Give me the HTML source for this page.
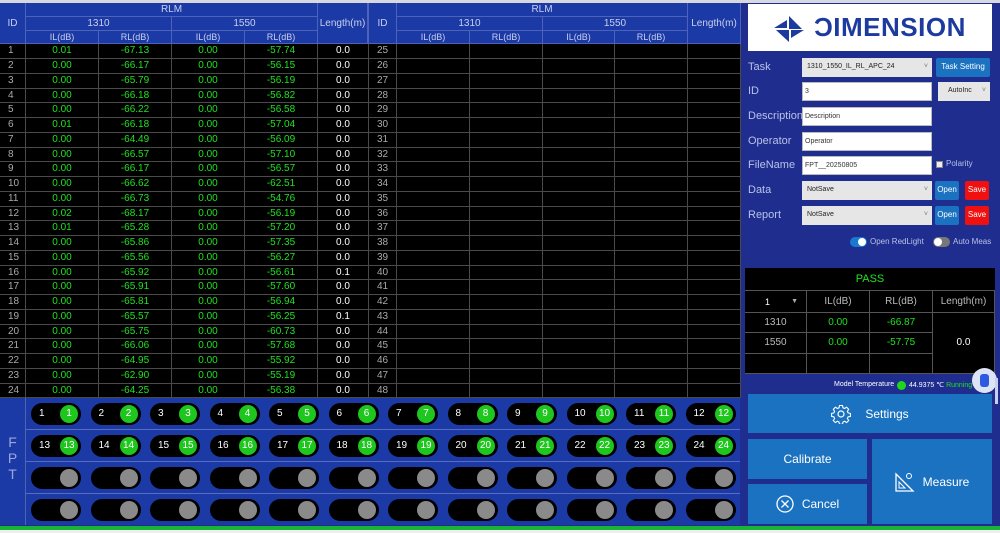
<!DOCTYPE html>
<html><head><meta charset="utf-8"><style>
*{box-sizing:border-box;margin:0;padding:0}
body{width:1000px;height:533px;background:#1e2d8e;font-family:"Liberation Sans",sans-serif;position:relative;overflow:hidden}
.topline{position:absolute;left:0;top:0;width:1000px;height:3px;background:#d8d8e0}
.grid{position:absolute;left:0;top:3px;width:740px;display:grid;grid-template-columns:26px 73px 73px 73px 73px 51px 28px 73px 73px 72px 73px 53px}
.h{background:#1c3aa6;color:#c8d0ee;font-size:10px;display:flex;align-items:center;justify-content:center;border-right:1px solid #4e63b8;border-bottom:1px solid #4e63b8}
.h.s{font-size:9px}
.rows{position:absolute;left:0;top:44px;width:740px}
.r{display:grid;grid-template-columns:26px 73px 73px 73px 73px 51px 28px 73px 73px 72px 73px 53px;height:15px}
.r:nth-child(4n){height:14px}
.r div{background:#000;border-right:1px solid #4a4a4a;border-bottom:1px solid #4a4a4a;font-size:10px;line-height:13px;text-align:center;color:#21e021;overflow:hidden}
.r div.i{color:#aaa;text-align:left;padding-left:8px}
.r div.i2{color:#aaa}
.r div.l{color:#fff}
.fpt{position:absolute;left:0;top:398px;width:740px;height:127px;background:#1c3aa6}
.fl{position:absolute;left:0;top:0;width:26px;height:127px;border-right:1px solid #4e63b8;color:#9aa6dc;font-size:14px;text-align:center;padding-top:36px;line-height:16px}
.fr{position:absolute;left:26px;width:714px;height:32px;border-bottom:1px solid #5a6cc0;display:flex;align-items:center;padding-left:5px}
.p{width:50px;height:22px;border-radius:11px;background:#000;margin-right:9.5px;position:relative;color:#fff;font-size:10px;line-height:22px;flex:none}
.p span{position:absolute;left:8px}
.p b{position:absolute;right:3px;top:2px;width:18px;height:18px;border-radius:50%;background:#1ec61e;color:#fff;font-weight:normal;font-size:10px;line-height:18px;text-align:center}
.p b.g{background:#8a8a8a}
.green{position:absolute;left:0;top:526px;width:1000px;height:4px;background:#19b436}
.white{position:absolute;left:0;top:530px;width:1000px;height:3px;background:#eee}
.lbl{position:absolute;left:748px;color:#b9c2e8;font-size:11px}
.in{position:absolute;background:#fff;border:1px solid #bbb;font-size:7px;color:#333;padding-left:2px;line-height:18px;height:19px}
.sel{position:absolute;background:#e6e6e6;font-size:7px;color:#222;padding-left:5px;line-height:18px;height:19px}
.sel:after{content:"˅";position:absolute;right:4px;top:0;color:#777;font-size:7px}
.bt{position:absolute;color:#fff;font-size:8px;text-align:center;line-height:18px;height:19px;border-radius:2px}
.rt{position:absolute;left:745px;top:268px;width:250px;height:106px;background:#000}
.rt div{position:absolute;border-right:1px solid #555;border-bottom:1px solid #555;color:#bbb;font-size:10px;text-align:center}
.big{position:absolute;background:#1a72c0;color:#fff;font-size:12px;display:flex;align-items:center;justify-content:center}
</style></head><body>
<div class="topline"></div>
<div class="grid" style="grid-template-rows:14px 14px 13px">
<div class="h" style="grid-row:1/4;grid-column:1">ID</div>
<div class="h" style="grid-row:1;grid-column:2/6">RLM</div>
<div class="h" style="grid-row:2;grid-column:2/4">1310</div>
<div class="h" style="grid-row:2;grid-column:4/6">1550</div>
<div class="h s" style="grid-row:3;grid-column:2">IL(dB)</div>
<div class="h s" style="grid-row:3;grid-column:3">RL(dB)</div>
<div class="h s" style="grid-row:3;grid-column:4">IL(dB)</div>
<div class="h s" style="grid-row:3;grid-column:5">RL(dB)</div>
<div class="h" style="grid-row:1/4;grid-column:6;border-right:2px solid #4e63b8">Length(m)</div>
<div class="h" style="grid-row:1/4;grid-column:7">ID</div>
<div class="h" style="grid-row:1;grid-column:8/12">RLM</div>
<div class="h" style="grid-row:2;grid-column:8/10">1310</div>
<div class="h" style="grid-row:2;grid-column:10/12">1550</div>
<div class="h s" style="grid-row:3;grid-column:8">IL(dB)</div>
<div class="h s" style="grid-row:3;grid-column:9">RL(dB)</div>
<div class="h s" style="grid-row:3;grid-column:10">IL(dB)</div>
<div class="h s" style="grid-row:3;grid-column:11">RL(dB)</div>
<div class="h" style="grid-row:1/4;grid-column:12">Length(m)</div>
</div>
<div class="rows">
<div class="r"><div class="i">1</div><div>0.01</div><div>-67.13</div><div>0.00</div><div>-57.74</div><div class="l">0.0</div><div class="i2">25</div><div></div><div></div><div></div><div></div><div></div></div>
<div class="r"><div class="i">2</div><div>0.00</div><div>-66.17</div><div>0.00</div><div>-56.15</div><div class="l">0.0</div><div class="i2">26</div><div></div><div></div><div></div><div></div><div></div></div>
<div class="r"><div class="i">3</div><div>0.00</div><div>-65.79</div><div>0.00</div><div>-56.19</div><div class="l">0.0</div><div class="i2">27</div><div></div><div></div><div></div><div></div><div></div></div>
<div class="r"><div class="i">4</div><div>0.00</div><div>-66.18</div><div>0.00</div><div>-56.82</div><div class="l">0.0</div><div class="i2">28</div><div></div><div></div><div></div><div></div><div></div></div>
<div class="r"><div class="i">5</div><div>0.00</div><div>-66.22</div><div>0.00</div><div>-56.58</div><div class="l">0.0</div><div class="i2">29</div><div></div><div></div><div></div><div></div><div></div></div>
<div class="r"><div class="i">6</div><div>0.01</div><div>-66.18</div><div>0.00</div><div>-57.04</div><div class="l">0.0</div><div class="i2">30</div><div></div><div></div><div></div><div></div><div></div></div>
<div class="r"><div class="i">7</div><div>0.00</div><div>-64.49</div><div>0.00</div><div>-56.09</div><div class="l">0.0</div><div class="i2">31</div><div></div><div></div><div></div><div></div><div></div></div>
<div class="r"><div class="i">8</div><div>0.00</div><div>-66.57</div><div>0.00</div><div>-57.10</div><div class="l">0.0</div><div class="i2">32</div><div></div><div></div><div></div><div></div><div></div></div>
<div class="r"><div class="i">9</div><div>0.00</div><div>-66.17</div><div>0.00</div><div>-56.57</div><div class="l">0.0</div><div class="i2">33</div><div></div><div></div><div></div><div></div><div></div></div>
<div class="r"><div class="i">10</div><div>0.00</div><div>-66.62</div><div>0.00</div><div>-62.51</div><div class="l">0.0</div><div class="i2">34</div><div></div><div></div><div></div><div></div><div></div></div>
<div class="r"><div class="i">11</div><div>0.00</div><div>-66.73</div><div>0.00</div><div>-54.76</div><div class="l">0.0</div><div class="i2">35</div><div></div><div></div><div></div><div></div><div></div></div>
<div class="r"><div class="i">12</div><div>0.02</div><div>-68.17</div><div>0.00</div><div>-56.19</div><div class="l">0.0</div><div class="i2">36</div><div></div><div></div><div></div><div></div><div></div></div>
<div class="r"><div class="i">13</div><div>0.01</div><div>-65.28</div><div>0.00</div><div>-57.20</div><div class="l">0.0</div><div class="i2">37</div><div></div><div></div><div></div><div></div><div></div></div>
<div class="r"><div class="i">14</div><div>0.00</div><div>-65.86</div><div>0.00</div><div>-57.35</div><div class="l">0.0</div><div class="i2">38</div><div></div><div></div><div></div><div></div><div></div></div>
<div class="r"><div class="i">15</div><div>0.00</div><div>-65.56</div><div>0.00</div><div>-56.27</div><div class="l">0.0</div><div class="i2">39</div><div></div><div></div><div></div><div></div><div></div></div>
<div class="r"><div class="i">16</div><div>0.00</div><div>-65.92</div><div>0.00</div><div>-56.61</div><div class="l">0.1</div><div class="i2">40</div><div></div><div></div><div></div><div></div><div></div></div>
<div class="r"><div class="i">17</div><div>0.00</div><div>-65.91</div><div>0.00</div><div>-57.60</div><div class="l">0.0</div><div class="i2">41</div><div></div><div></div><div></div><div></div><div></div></div>
<div class="r"><div class="i">18</div><div>0.00</div><div>-65.81</div><div>0.00</div><div>-56.94</div><div class="l">0.0</div><div class="i2">42</div><div></div><div></div><div></div><div></div><div></div></div>
<div class="r"><div class="i">19</div><div>0.00</div><div>-65.57</div><div>0.00</div><div>-56.25</div><div class="l">0.1</div><div class="i2">43</div><div></div><div></div><div></div><div></div><div></div></div>
<div class="r"><div class="i">20</div><div>0.00</div><div>-65.75</div><div>0.00</div><div>-60.73</div><div class="l">0.0</div><div class="i2">44</div><div></div><div></div><div></div><div></div><div></div></div>
<div class="r"><div class="i">21</div><div>0.00</div><div>-66.06</div><div>0.00</div><div>-57.68</div><div class="l">0.0</div><div class="i2">45</div><div></div><div></div><div></div><div></div><div></div></div>
<div class="r"><div class="i">22</div><div>0.00</div><div>-64.95</div><div>0.00</div><div>-55.92</div><div class="l">0.0</div><div class="i2">46</div><div></div><div></div><div></div><div></div><div></div></div>
<div class="r"><div class="i">23</div><div>0.00</div><div>-62.90</div><div>0.00</div><div>-55.19</div><div class="l">0.0</div><div class="i2">47</div><div></div><div></div><div></div><div></div><div></div></div>
<div class="r"><div class="i">24</div><div>0.00</div><div>-64.25</div><div>0.00</div><div>-56.38</div><div class="l">0.0</div><div class="i2">48</div><div></div><div></div><div></div><div></div><div></div></div>
</div>

<div class="fpt">
<div class="fl">F<br>P<br>T</div>
<div class="fr" style="top:0">
<div class="p"><span>1</span><b>1</b></div><div class="p"><span>2</span><b>2</b></div><div class="p"><span>3</span><b>3</b></div><div class="p"><span>4</span><b>4</b></div><div class="p"><span>5</span><b>5</b></div><div class="p"><span>6</span><b>6</b></div><div class="p"><span>7</span><b>7</b></div><div class="p"><span>8</span><b>8</b></div><div class="p"><span>9</span><b>9</b></div><div class="p"><span>10</span><b>10</b></div><div class="p"><span>11</span><b>11</b></div><div class="p"><span>12</span><b>12</b></div>
</div>
<div class="fr" style="top:32px">
<div class="p"><span>13</span><b>13</b></div><div class="p"><span>14</span><b>14</b></div><div class="p"><span>15</span><b>15</b></div><div class="p"><span>16</span><b>16</b></div><div class="p"><span>17</span><b>17</b></div><div class="p"><span>18</span><b>18</b></div><div class="p"><span>19</span><b>19</b></div><div class="p"><span>20</span><b>20</b></div><div class="p"><span>21</span><b>21</b></div><div class="p"><span>22</span><b>22</b></div><div class="p"><span>23</span><b>23</b></div><div class="p"><span>24</span><b>24</b></div>
</div>
<div class="fr" style="top:64px">
<div class="p"><b class="g"></b></div><div class="p"><b class="g"></b></div><div class="p"><b class="g"></b></div><div class="p"><b class="g"></b></div><div class="p"><b class="g"></b></div><div class="p"><b class="g"></b></div><div class="p"><b class="g"></b></div><div class="p"><b class="g"></b></div><div class="p"><b class="g"></b></div><div class="p"><b class="g"></b></div><div class="p"><b class="g"></b></div><div class="p"><b class="g"></b></div>
</div>
<div class="fr" style="top:96px;border-bottom:none">
<div class="p"><b class="g"></b></div><div class="p"><b class="g"></b></div><div class="p"><b class="g"></b></div><div class="p"><b class="g"></b></div><div class="p"><b class="g"></b></div><div class="p"><b class="g"></b></div><div class="p"><b class="g"></b></div><div class="p"><b class="g"></b></div><div class="p"><b class="g"></b></div><div class="p"><b class="g"></b></div><div class="p"><b class="g"></b></div><div class="p"><b class="g"></b></div>
</div>
</div>

<!-- right panel -->
<div style="position:absolute;left:748px;top:4px;width:244px;height:47px;background:#fff;overflow:hidden">
<svg style="position:absolute;left:24px;top:4px" width="36" height="42" viewBox="0 0 36 42">
<polygon points="15,1 15,12 2,20 15,20" fill="#1d3a9e"/>
<polygon points="2,21 17,21 17,9" fill="#1d3a9e" opacity="0"/>
<polygon points="17,8 17,21 30,21" fill="#1d3a9e"/>
<polygon points="4,22 17,22 17,34" fill="#1d3a9e"/>
<polygon points="19,22 32,22 19,30 19,41" fill="#1d3a9e"/>
</svg>
<div style="position:absolute;left:66px;top:8px;font-size:26px;font-weight:bold;color:#1d3a9e;line-height:30px;letter-spacing:0.5px">ƆIMENSION</div>
</div>

<div class="lbl" style="top:61px">Task</div>
<div class="sel" style="left:802px;top:58px;width:130px">1310_1550_IL_RL_APC_24</div>
<div class="bt" style="left:936px;top:58px;width:54px;background:#1a72c0">Task Setting</div>
<div class="lbl" style="top:85px">ID</div>
<div class="in" style="left:802px;top:82px;width:130px">3</div>
<div class="sel" style="left:938px;top:82px;width:52px;padding-left:10px">AutoInc</div>
<div class="lbl" style="top:110px">Description</div>
<div class="in" style="left:802px;top:107px;width:130px">Description</div>
<div class="lbl" style="top:135px">Operator</div>
<div class="in" style="left:802px;top:132px;width:130px">Operator</div>
<div class="lbl" style="top:159px">FileName</div>
<div class="in" style="left:802px;top:156px;width:130px">FPT__20250805</div>
<div style="position:absolute;left:936px;top:161px;width:7px;height:7px;background:#eee;border:1px solid #888"></div>
<div style="position:absolute;left:946px;top:159px;font-size:8px;color:#b9c2e8">Polarity</div>
<div class="lbl" style="top:184px">Data</div>
<div class="sel" style="left:802px;top:181px;width:130px">NotSave</div>
<div class="bt" style="left:935px;top:181px;width:24px;background:#1a72c0">Open</div>
<div class="bt" style="left:965px;top:181px;width:24px;background:#f01010">Save</div>
<div class="lbl" style="top:209px">Report</div>
<div class="sel" style="left:802px;top:206px;width:130px">NotSave</div>
<div class="bt" style="left:935px;top:206px;width:24px;background:#1a72c0">Open</div>
<div class="bt" style="left:965px;top:206px;width:24px;background:#f01010">Save</div>
<div style="position:absolute;left:850px;top:237px;width:17px;height:10px;border-radius:5px;background:#1a78d0"></div>
<div style="position:absolute;left:858px;top:238px;width:8px;height:8px;border-radius:50%;background:#fff"></div>
<div style="position:absolute;left:870px;top:237px;font-size:8px;color:#b9c2e8">Open RedLight</div>
<div style="position:absolute;left:933px;top:237px;width:17px;height:10px;border-radius:5px;background:#777"></div>
<div style="position:absolute;left:934px;top:238px;width:8px;height:8px;border-radius:50%;background:#fff"></div>
<div style="position:absolute;left:953px;top:237px;font-size:8px;color:#b9c2e8">Auto Meas</div>

<div class="rt">
<div style="left:0;top:0;width:250px;height:22px;color:#21e021;font-size:11px;line-height:22px;border:none">PASS</div>
<div style="left:0;top:22px;width:62px;height:23px;line-height:22px;color:#fff;text-align:left;padding-left:20px;font-size:9px;border-top:1px solid #555">1<span style="position:absolute;right:8px;font-size:7px;color:#aaa">▼</span></div>
<div style="left:62px;top:22px;width:63px;height:23px;line-height:22px;border-top:1px solid #555">IL(dB)</div>
<div style="left:125px;top:22px;width:63px;height:23px;line-height:22px;border-top:1px solid #555">RL(dB)</div>
<div style="left:188px;top:22px;width:62px;height:23px;line-height:22px;border-top:1px solid #555">Length(m)</div>
<div style="left:0;top:45px;width:62px;height:20px;line-height:19px">1310</div>
<div style="left:62px;top:45px;width:63px;height:20px;line-height:19px;color:#21e021">0.00</div>
<div style="left:125px;top:45px;width:63px;height:20px;line-height:19px;color:#21e021">-66.87</div>
<div style="left:0;top:65px;width:62px;height:21px;line-height:20px">1550</div>
<div style="left:62px;top:65px;width:63px;height:21px;line-height:20px;color:#21e021">0.00</div>
<div style="left:125px;top:65px;width:63px;height:21px;line-height:20px;color:#21e021">-57.75</div>
<div style="left:188px;top:45px;width:62px;height:61px;line-height:60px;color:#fff">0.0</div>
<div style="left:0;top:86px;width:62px;height:20px"></div>
<div style="left:62px;top:86px;width:63px;height:20px"></div>
<div style="left:125px;top:86px;width:63px;height:20px"></div>
</div>
<div style="position:absolute;left:834px;top:381px;font-size:7px;color:#fff">Model Temperature</div>
<div style="position:absolute;left:897px;top:381px;width:9px;height:9px;border-radius:50%;background:#1ed61e"></div>
<div style="position:absolute;left:909px;top:381px;font-size:7px;color:#fff">44.9375 ℃ <span style="color:#21e021">Running</span></div>
<div style="position:absolute;left:972px;top:368px;width:25px;height:25px;border-radius:50%;background:#dde4f6"></div>
<div style="position:absolute;left:980px;top:374px;width:9px;height:13px;border-radius:3px;background:#2d5ae0"></div>

<div class="big" style="left:748px;top:394px;width:244px;height:39px;font-size:12px">
<svg width="20" height="20" viewBox="0 0 20 20" style="margin-right:14px"><circle cx="10" cy="10" r="3" fill="none" stroke="#fff" stroke-width="1.2"/><path d="M8.5 1.5h3l.5 2.3 1.6.7 2-1.3 2.1 2.1-1.3 2 .7 1.6 2.3.5v3l-2.3.5-.7 1.6 1.3 2-2.1 2.1-2-1.3-1.6.7-.5 2.3h-3l-.5-2.3-1.6-.7-2 1.3-2.1-2.1 1.3-2-.7-1.6-2.3-.5v-3l2.3-.5.7-1.6-1.3-2 2.1-2.1 2 1.3 1.6-.7z" fill="none" stroke="#fff" stroke-width="1.1"/></svg>Settings</div>
<div class="big" style="left:748px;top:439px;width:119px;height:40px">Calibrate</div>
<div class="big" style="left:748px;top:484px;width:119px;height:40px">
<svg width="18" height="18" viewBox="0 0 18 18" style="margin-right:8px"><circle cx="9" cy="9" r="8" fill="none" stroke="#fff" stroke-width="1.3"/><path d="M5.5 5.5l7 7M12.5 5.5l-7 7" stroke="#fff" stroke-width="1.3"/></svg>Cancel</div>
<div class="big" style="left:872px;top:439px;width:120px;height:85px">
<svg width="20" height="20" viewBox="0 0 20 20" style="margin-right:8px"><path d="M1 2v17h17z" fill="none" stroke="#fff" stroke-width="1.3"/><path d="M4 10v6h6z" fill="none" stroke="#fff" stroke-width="1"/><circle cx="14" cy="4" r="2.5" fill="none" stroke="#fff" stroke-width="1"/></svg>Measure</div>
<div style="position:absolute;left:995px;top:378px;width:3px;height:26px;background:#c8d0ee"></div>

<div class="green"></div>
<div class="white"></div>
</body></html>
